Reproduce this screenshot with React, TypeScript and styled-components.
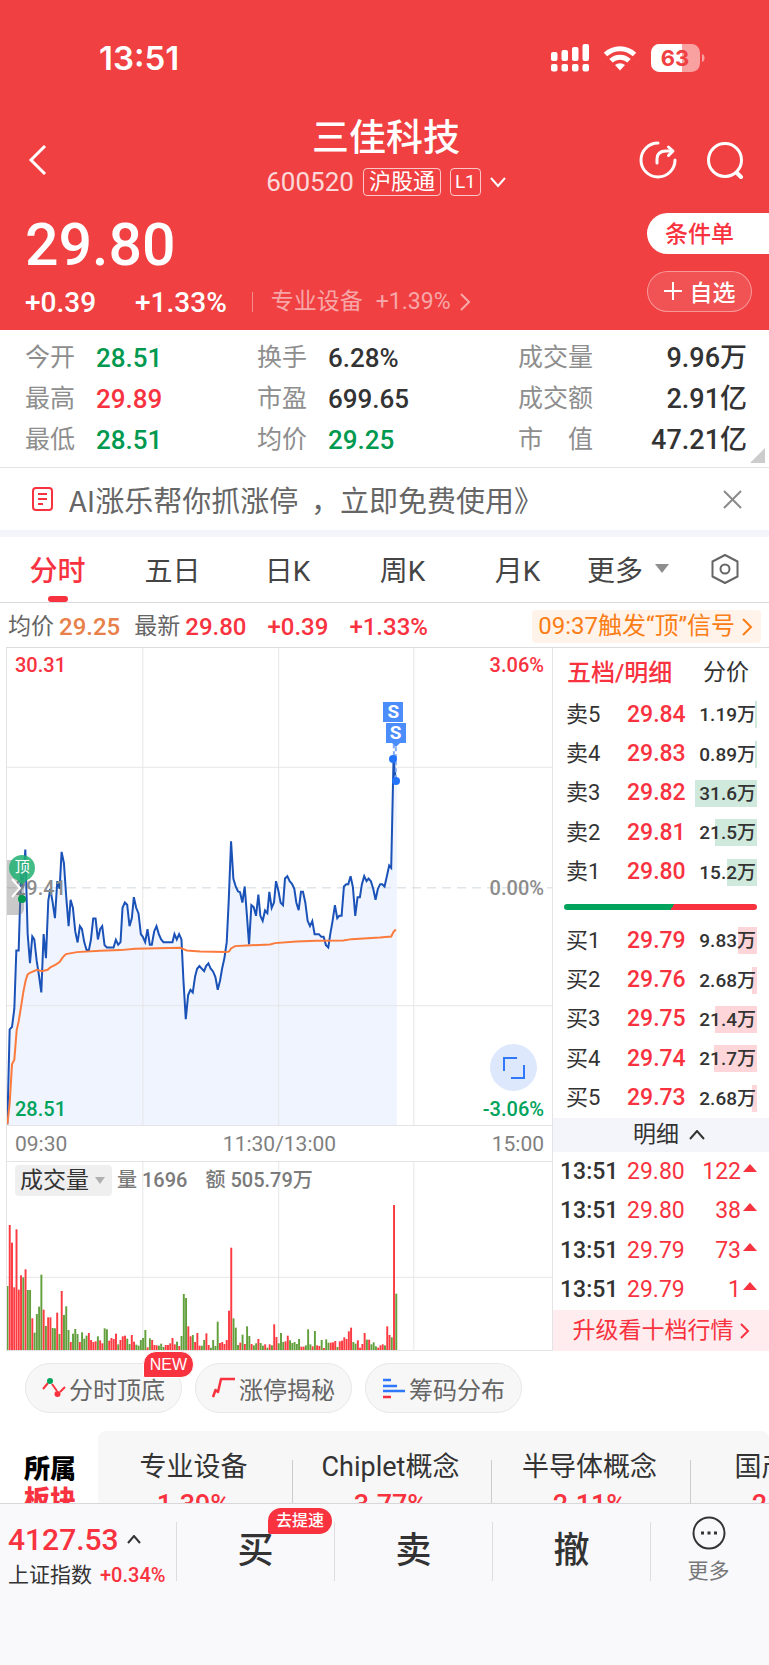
import styled, { createGlobalStyle } from 'styled-components';

const RED = '#f8333f';
const GREEN = '#00a35c';
const DARK_GREEN = '#00994f';
const LINE = '#e4e4e6';
const TEXT = '#333';

const GlobalStyle = createGlobalStyle`
  * {
    box-sizing: border-box;
  }

  body {
    margin: 0;
    background: #fff;
    color: ${TEXT};
    font-family: Roboto, 'Noto Sans CJK SC', sans-serif;
  }

  button,
  select {
    margin: 0;
    padding: 0;
    border: none;
    background: none;
    color: inherit;
    font: inherit;
    cursor: pointer;
  }

  a {
    color: inherit;
    text-decoration: none;
  }

  svg {
    display: block;
    flex: none;
  }
`;

const Screen = styled.div`
  display: flex;
  flex-direction: column;
  height: 100vh;
`;

const Content = styled.main`
  flex: 1;
  min-height: 0;
  overflow: hidden;
`;

/* ---------- header ---------- */

const Header = styled.header`
  height: 330px;
  background: #f04042;
  color: #fff;
`;

const StatusBar = styled.div`
  display: flex;
  align-items: center;
  justify-content: space-between;
  height: 116px;
  padding: 0 64px 0 99px;
  font: 600 33px/1 Inter, sans-serif;

  div {
    display: flex;
    align-items: center;
    gap: 14px;
  }
`;

const TitleBar = styled.div`
  display: grid;
  grid-template-columns: 1fr auto 1fr;
  align-items: center;
  height: 84px;
  padding: 0 25px 0 28px;
`;

const TitleBlock = styled.div`
  display: flex;
  flex-direction: column;
  align-items: center;
  gap: 6px;

  h1 {
    margin: 0;
    font: 500 37px/38px 'Noto Sans CJK SC', sans-serif;
  }
`;

const CodeRow = styled.div`
  display: flex;
  align-items: center;
  gap: 9px;
  height: 44px;
  font-size: 26px;

  > span:first-child {
    opacity: 0.8;
  }
`;

const Tag = styled.span`
  height: 28px;
  padding: 0 5px;
  border: 1px solid rgba(255, 255, 255, 0.7);
  border-radius: 4px;
  font-size: 22px;
  line-height: 25px;
`;

const LevelTag = styled(Tag)`
  padding: 0 4px;
  font-size: 19px;
`;

const IconGroup = styled.div`
  display: flex;
  justify-content: flex-end;
  gap: 29px;
`;

const QuoteHead = styled.div`
  display: flex;
  justify-content: space-between;
  padding: 13px 0 0 25px;
`;

const Price = styled.div`
  font-size: 59px;
  font-weight: 500;
  line-height: 64px;
`;

const ChangeRow = styled.div`
  display: flex;
  align-items: center;
  height: 28px;
  margin-top: 11px;
  font-size: 28px;
  font-weight: 500;

  > span + span {
    margin-left: 39px;
  }

  a {
    display: flex;
    align-items: center;
    gap: 13px;
    margin-left: 25px;
    padding-left: 18px;
    border-left: 1px solid rgba(255, 255, 255, 0.4);
    font-size: 23px;
    font-weight: 400;
    line-height: 20px;
    color: rgba(255, 255, 255, 0.55);
  }

  svg {
    margin-left: -4px;
  }
`;

const HeadActions = styled.div`
  display: flex;
  flex-direction: column;
  gap: 17px;
  width: 122px;
  font-size: 23px;
  font-weight: 500;
`;

const OrderButton = styled.button`
  height: 41px;
  padding: 0 34px 3px 18px;
  border-radius: 21px 0 0 21px;
  background: #fff;
  color: ${RED};
  text-align: left;
  white-space: nowrap;
`;

const WatchButton = styled.button`
  display: flex;
  align-items: center;
  justify-content: center;
  gap: 8px;
  height: 41px;
  width: 105px;
  padding-bottom: 2px;
  border: 1px solid rgba(255, 255, 255, 0.4);
  border-radius: 21px;
  background: rgba(255, 255, 255, 0.1);
`;

/* ---------- stats and banner ---------- */

const Stats = styled.dl`
  position: relative;
  display: grid;
  grid-template-columns: 232fr 261fr 229fr;
  grid-auto-rows: 41px;
  margin: 0;
  padding: 7px 22px 7px 25px;
  border-bottom: 1px solid ${LINE};
`;

const Stat = styled.div<{ $spread?: boolean; $color?: string }>`
  display: flex;
  align-items: center;
  justify-content: ${(p) => (p.$spread ? 'space-between' : 'flex-start')};
  gap: 21px;

  dt {
    font-size: 25px;
    color: #8e8e8e;
    line-height: 40px;
  }

  dd {
    margin: 0;
    font-size: ${(p) => (p.$spread ? 27 : 26)}px;
    font-weight: 500;
    line-height: 40px;
    color: ${(p) => p.$color ?? TEXT};
  }
`;

const Corner = styled.i`
  position: absolute;
  right: 4px;
  bottom: 4px;
  border-bottom: 15px solid #ccc;
  border-left: 15px solid transparent;
`;

const Banner = styled.div`
  display: flex;
  align-items: center;
  height: 69px;
  padding: 0 27px 0 32px;
  border-bottom: 7px solid #f3f5fb;

  a {
    flex: 1;
    margin-left: 15px;
    font: 400 29px/40px 'Noto Sans CJK SC', sans-serif;
    color: #666;
    white-space: pre;
  }
`;

/* ---------- period tabs ---------- */

const Tabs = styled.nav`
  display: grid;
  grid-template-columns: repeat(5, 115fr) 106fr 88fr;
  height: 66px;
  border-bottom: 1px solid #dcdcde;
`;

const Tab = styled.button<{ $active?: boolean }>`
  position: relative;
  display: flex;
  align-items: center;
  justify-content: center;
  gap: 12px;
  padding-bottom: 2px;
  font-size: 28px;
  font-weight: ${(p) => (p.$active ? 500 : 400)};
  color: ${(p) => (p.$active ? RED : '#444')};

  &::after {
    content: '';
    display: ${(p) => (p.$active ? 'block' : 'none')};
    position: absolute;
    bottom: 0;
    width: 20px;
    height: 6px;
    border-radius: 3px;
    background: ${RED};
  }
`;

const Triangle = styled.i<{ $size: number; $color: string }>`
  border-top: ${(p) => p.$size + 2}px solid ${(p) => p.$color};
  border-left: ${(p) => p.$size}px solid transparent;
  border-right: ${(p) => p.$size}px solid transparent;
`;

const InfoRow = styled.div`
  display: flex;
  align-items: center;
  height: 44px;
  padding: 3px 8px 0;
  font-size: 24px;
  line-height: 32px;
  white-space: nowrap;
`;

const InfoLabel = styled.span`
  font-size: 23px;
  color: #666;
`;

const InfoValue = styled.b<{ $color?: string; $gap?: number }>`
  margin: 0 ${(p) => p.$gap ?? 21}px 0 0;
  font-weight: 500;
  color: ${(p) => p.$color ?? RED};

  ${InfoLabel} + & {
    margin-left: 5px;
  }
`;

const Signal = styled.button`
  display: flex;
  align-items: center;
  gap: 7px;
  height: 33px;
  margin-left: auto;
  padding: 0 8px 0 6px;
  border-radius: 4px;
  background: #fff3ea;
  color: #fb7d15;
  line-height: 33px;
`;

/* ---------- charts ---------- */

const Board = styled.section`
  display: grid;
  grid-template-columns: 547fr 216fr;
  margin-left: 6px;
  border-top: 1px solid #dcdcde;
`;

const ChartColumn = styled.div`
  border-left: 1px solid ${LINE};
  border-right: 1px solid ${LINE};
`;

const ChartBox = styled.div<{ $height: number }>`
  position: relative;
  height: ${(p) => p.$height}px;
  border-bottom: 1px solid ${LINE};

  > svg {
    width: 100%;
    height: 100%;
  }
`;

const ChartLabel = styled.span<{ $top: string; $right?: boolean; $color: string }>`
  position: absolute;
  top: ${(p) => p.$top};
  ${(p) => (p.$right ? 'right: 8px' : 'left: 8px')};
  font-size: 20px;
  font-weight: 500;
  line-height: 24px;
  color: ${(p) => p.$color};
`;

const Pin = styled.div<{ $x: number; $y: number }>`
  position: absolute;
  left: ${(p) => p.$x}%;
  top: ${(p) => p.$y}%;
  transform: translate(-50%, -50%);
`;

const SellFlag = styled(Pin)`
  width: 22px;
  height: 22px;
  border: 1px solid #fff;
  background: #4c8dfc;
  color: #fff;
  font-size: 19px;
  font-weight: 700;
  line-height: 20px;
  text-align: center;

  &::after {
    content: '';
    position: absolute;
    left: 6px;
    top: 20px;
    border-top: 4px solid #4c8dfc;
    border-left: 4px solid transparent;
    border-right: 4px solid transparent;
  }
`;

const Dot = styled(Pin)<{ $color: string }>`
  width: 8px;
  height: 8px;
  border-radius: 50%;
  background: ${(p) => p.$color};
`;

const TopFlag = styled(Pin)`
  width: 26px;
  height: 26px;
  border-radius: 50%;
  background: rgba(34, 178, 115, 0.85);
  color: #fff;
  font-size: 15px;
  line-height: 25px;
  text-align: center;

  &::after {
    content: '';
    position: absolute;
    left: 8px;
    top: 25px;
    border-top: 5px solid rgba(34, 178, 115, 0.85);
    border-left: 5px solid transparent;
    border-right: 5px solid transparent;
  }
`;

const SideHandle = styled.button`
  position: absolute;
  left: 0;
  top: 44.5%;
  display: flex;
  align-items: center;
  width: 17px;
  height: 55px;
  padding-left: 3px;
  border-radius: 0 6px 6px 0;
  background: rgba(120, 120, 120, 0.4);
  color: #fff;
`;

const ExpandButton = styled.button`
  position: absolute;
  right: 15px;
  bottom: 34px;
  display: grid;
  place-items: center;
  width: 47px;
  height: 47px;
  border-radius: 50%;
  background: #dee8fd;
`;

const TimeAxis = styled.div`
  display: flex;
  align-items: center;
  justify-content: space-between;
  height: 36px;
  padding: 0 8px;
  border-bottom: 1px solid ${LINE};
  font-size: 21px;
  color: #808080;
`;

const VolumeHead = styled.div`
  position: absolute;
  top: 3px;
  left: 8px;
  display: flex;
  align-items: center;
  font-size: 20px;
  font-weight: 500;
  line-height: 31px;
  color: #7a7a7a;

  span {
    margin-left: 5px;
    white-space: pre;
  }

  span + span {
    margin-left: 18px;
  }
`;

const VolumePicker = styled.label`
  position: relative;
  display: flex;
  align-items: center;
  width: 97px;
  height: 31px;
  border-radius: 4px;
  background: #efefef;

  select {
    appearance: none;
    width: 100%;
    height: 31px;
    padding-left: 5px;
    font-size: 23px;
    font-weight: 400;
    line-height: 31px;
    color: ${TEXT};
    outline: none;
  }

  i {
    position: absolute;
    right: 7px;
  }
`;

/* ---------- order book ---------- */

const BookHead = styled.div`
  display: flex;
  align-items: center;
  justify-content: space-between;
  height: 47px;
  padding: 0 20px 3px 14px;
  font-size: 23px;

  button:first-child {
    font-size: 24px;
    font-weight: 500;
    color: ${RED};
  }
`;

const BookTable = styled.table`
  width: 100%;
  height: 197px;
  border-collapse: collapse;

  td,
  th {
    padding: 0;
    font-size: 22px;
    font-weight: 400;
    line-height: 30px;
    text-align: left;
  }

  th {
    width: 74px;
    padding-left: 13px;
  }

  td {
    font-size: 23px;
    font-weight: 500;
    color: ${RED};
  }

  td:last-child {
    padding-right: 12px;
    text-align: right;
  }
`;

const Depth = styled.div<{ $color: string }>`
  position: relative;
  width: 62px;
  height: 27px;
  margin-left: auto;
  font-size: 19px;
  line-height: 27px;
  color: ${TEXT};

  i {
    position: absolute;
    top: 0;
    right: 0;
    height: 100%;
    background: ${(p) => p.$color};
  }

  span {
    position: relative;
    margin-right: 1px;
  }
`;

const Balance = styled.div`
  height: 6px;
  margin: 12px 12px 11px 11px;
  border-radius: 3px;
  background: linear-gradient(120deg, ${GREEN} 56%, ${RED} 56%);
`;

const DetailToggle = styled.button`
  display: flex;
  align-items: center;
  justify-content: center;
  gap: 10px;
  width: 100%;
  height: 34px;
  padding-left: 16px;
  background: #f3f5fa;
  font-size: 23px;
  line-height: 32px;
`;

const TickTable = styled(BookTable)`
  height: 158px;

  th {
    padding-left: 7px;
    font-size: 23px;
    font-weight: 500;
  }

  td {
    font-weight: 400;
  }

  td:last-child svg {
    display: inline-block;
    margin-left: 2px;
    vertical-align: 7px;
  }
`;

const Upgrade = styled.a`
  display: flex;
  align-items: center;
  justify-content: center;
  gap: 6px;
  height: 41px;
  background: #feecee;
  color: ${RED};
  font-size: 23px;
  line-height: 40px;
`;

/* ---------- chips and sectors ---------- */

const Chips = styled.div`
  display: flex;
  gap: 13px;
  padding: 12px 25px 18px;
`;

const Chip = styled.button`
  position: relative;
  display: flex;
  align-items: center;
  justify-content: center;
  gap: 3px;
  width: 157px;
  height: 50px;
  border: 1px solid #e8e8e8;
  border-radius: 25px;
  background: #f7f7f7;
  color: #666;
  font-size: 24px;
  white-space: nowrap;
`;

const Badge = styled.em`
  position: absolute;
  height: 26px;
  padding: 0 8px;
  border-radius: 13px 13px 13px 2px;
  background: ${RED};
  color: #fff;
  font: 500 16px/25px 'Liberation Sans', 'Noto Sans CJK SC', sans-serif;
  white-space: nowrap;
`;

const NewBadge = styled(Badge)`
  right: -13px;
  top: -13px;
  height: 27px;
  padding: 0 6px;
  border: 1px solid #fff;
  font-weight: 400;
`;

const Sectors = styled.section`
  display: flex;
`;

const SectorTitle = styled.h2`
  flex: none;
  width: 98px;
  margin: 0;
  padding: 20px 0 0 24px;
  font: 900 26px/31px 'Noto Sans CJK SC', sans-serif;
  color: #000;

  span {
    display: block;
    color: ${RED};
  }
`;

const SectorList = styled.div`
  flex: 1;
  display: flex;
  padding-top: 29px;
  border-radius: 8px 8px 0 0;
  background: #f7f7f7;
  overflow: hidden;
`;

const Sector = styled.a`
  flex: 0 0 199px;
  display: flex;
  flex-direction: column;
  align-items: center;
  gap: 20px;
  height: 80px;
  padding-right: 3px;
  border-right: 1px solid #ccc;
  font-size: 27px;
  line-height: 14px;
  white-space: nowrap;

  &:first-child {
    flex-basis: 195px;
  }

  b {
    font-weight: 500;
    line-height: 22px;
    color: ${RED};
  }
`;

/* ---------- bottom bar ---------- */

const BottomBar = styled.footer`
  display: grid;
  grid-template-columns: 177fr 158fr 158fr 158fr 118fr;
  align-items: start;
  padding: 18px 0 80px;
  border-top: 1px solid #d8d8dc;
  background: #f9f9fc;
`;

const IndexCell = styled.button`
  display: flex;
  flex-direction: column;
  gap: 2px;
  height: 59px;
  padding-left: 8px;
  border-right: 1px solid #ddd;
  color: ${RED};

  div {
    display: flex;
    align-items: center;
    gap: 8px;
    font-size: 20px;
    font-weight: 500;
    line-height: 30px;
    white-space: nowrap;
  }

  div:first-child {
    font-size: 30px;
    line-height: 36px;
  }

  svg,
  span {
    font-size: 21px;
    font-weight: 400;
    color: ${TEXT};
  }
`;

const Trade = styled.button`
  position: relative;
  height: 59px;
  border-right: 1px solid #ddd;
  font-size: 36px;
  font-weight: 500;
  line-height: 59px;
`;

const SpeedBadge = styled(Badge)`
  right: 2px;
  top: -14px;
`;

const MoreCell = styled.button`
  display: flex;
  flex-direction: column;
  align-items: center;
  gap: 7px;
  padding-right: 3px;
  font-size: 21px;
  line-height: 28px;
  color: #777;

  svg {
    margin-top: -6px;
  }
`;

/* ---------- data ---------- */

const stats = [
  { label: '今开', value: '28.51', color: DARK_GREEN },
  { label: '换手', value: '6.28%' },
  { label: '成交量', value: '9.96万', spread: true },
  { label: '最高', value: '29.89', color: RED },
  { label: '市盈', value: '699.65' },
  { label: '成交额', value: '2.91亿', spread: true },
  { label: '最低', value: '28.51', color: DARK_GREEN },
  { label: '均价', value: '29.25', color: DARK_GREEN },
  { label: '市　值', value: '47.21亿', spread: true },
];

const periods = ['分时', '五日', '日K', '周K', '月K'];

interface IOrder {
  name: string;
  price: string;
  volume: string;
  depth: number;
}

const asks: IOrder[] = [
  { name: '卖5', price: '29.84', volume: '1.19万', depth: 3 },
  { name: '卖4', price: '29.83', volume: '0.89万', depth: 3 },
  { name: '卖3', price: '29.82', volume: '31.6万', depth: 100 },
  { name: '卖2', price: '29.81', volume: '21.5万', depth: 68 },
  { name: '卖1', price: '29.80', volume: '15.2万', depth: 48 },
];

const bids: IOrder[] = [
  { name: '买1', price: '29.79', volume: '9.83万', depth: 31 },
  { name: '买2', price: '29.76', volume: '2.68万', depth: 8 },
  { name: '买3', price: '29.75', volume: '21.4万', depth: 68 },
  { name: '买4', price: '29.74', volume: '21.7万', depth: 69 },
  { name: '买5', price: '29.73', volume: '2.68万', depth: 8 },
];

const ticks = [
  ['13:51', '29.80', '122'],
  ['13:51', '29.80', '38'],
  ['13:51', '29.79', '73'],
  ['13:51', '29.79', '1'],
];

const sectors = [
  ['专业设备', '1.39%'],
  ['Chiplet概念', '3.77%'],
  ['半导体概念', '2.11%'],
  ['国产芯片', '2.05%'],
];

const pricePoints =
  '21,1452 28,1167 35,1160 42,1105 48,930 55,930 62,700 68,740 75,627 82,880 89,968 96,888 102,897 109,960 116,1005 123,1056 130,881 137,953 144,780 150,745 157,785 164,833 171,722 178,745 184,634 191,668 198,770 205,857 211,778 218,802 225,873 232,906 239,857 245,865 252,905 259,929 266,929 272,898 279,834 286,834 293,897 300,865 306,857 313,914 320,921 340,921 347,898 354,913 361,905 367,802 374,786 381,793 388,857 395,833 401,770 408,802 415,819 422,881 428,889 435,905 442,866 449,913 455,913 462,873 469,857 476,881 483,897 490,905 517,905 523,881 530,897 537,881 544,897 550,1020 557,1136 564,1064 571,1048 578,1056 585,1008 591,985 598,977 612,992 618,977 625,969 632,985 639,993 646,1010 653,1048 660,1020 666,985 673,953 680,905 686,780 693,602 700,715 707,738 714,753 720,755 727,786 734,738 741,830 747,912 754,794 761,800 768,826 775,762 781,826 788,841 795,810 802,818 808,754 815,802 822,786 828,722 835,750 842,787 849,794 855,714 862,707 869,722 876,730 883,745 889,786 896,809 903,754 909,754 916,786 923,841 930,857 937,842 944,881 957,881 964,889 971,889 978,914 985,921 991,881 998,841 1005,794 1012,833 1018,826 1025,826 1032,738 1039,731 1045,731 1052,707 1059,740 1066,826 1073,770 1080,770 1086,731 1093,707 1100,722 1106,714 1113,722 1120,745 1127,778 1134,745 1141,731 1147,731 1154,738 1161,707 1168,675 1174,682 1181,356 1188,420';

const averagePoints =
  '21,1452 28,1390 35,1272 42,1258 49,1170 55,1143 62,1100 69,1055 76,1020 82,1002 89,997 110,988 125,992 142,988 150,981 165,973 178,965 188,950 197,941 230,935 300,931 360,929 405,925 540,922 560,930 600,933 680,935 687,933 693,924 705,917 740,915 810,912 825,908 890,903 950,901 1030,900 1055,896 1140,891 1174,888 1181,874 1188,867';

// One entry per minute: g = down, r = up, followed by the bar height
const volumes =
  'g192 r375 r322 r188 r362 r181 r224 g218 r242 g180 g180 r95 g52 g108 g130 g226 r121 g72 r98 r98 g66 g65 r112 g48 r177 g105 g131 g60 r24 g49 g63 g48 r24 g53 g34 g43 r51 r30 r24 r26 g41 r29 r20 g65 g62 r28 r36 r33 r49 g17 r30 r41 r43 g34 g18 r45 r25 g16 g13 g30 g36 g60 r8 g35 r30 r15 r14 g13 g19 g9 r15 r15 r20 r36 r17 g25 r12 g42 g168 g156 r71 r41 g45 r24 r51 r13 g13 g30 r50 r15 g7 g30 g12 g85 r21 r24 r18 r30 r118 r307 g95 g67 g15 r22 g46 r18 g71 g42 r18 g14 g20 r33 g21 g13 r17 g7 r17 g14 r77 r39 g20 g51 g24 r26 r43 g29 g21 g24 g18 g33 r10 r10 g14 g62 g17 r11 g57 r14 r12 g30 r6 g32 g22 r22 r23 r27 g9 r26 r28 r38 r33 r56 r67 g24 g19 r29 r7 r18 r51 g31 r31 g17 g23 g11 r7 r14 r17 g14 r71 r45 g38 r435 g169'.split(
    ' ',
  );

/* ---------- components ---------- */

interface IChevronProps {
  d: string;
  width: number;
  height: number;
  stroke?: number;
}

function Chevron({ d, width, height, stroke = 2 }: IChevronProps) {
  return (
    <svg width={width} height={height} fill="none" stroke="currentColor" strokeWidth={stroke}>
      <path d={d} />
    </svg>
  );
}

function StatusIcons() {
  return (
    <div>
      <svg width="38" height="28" fill="#fff">
        {[0, 1, 2, 3].map((i) => (
          <g key={i}>
            <rect x={i * 10.5} y={[8, 6, 3, 0][i]} width="6.5" height={[9, 11, 14, 17][i]} rx="2" />
            <rect x={i * 10.5} y="20" width="6.5" height="7.5" rx="2" />
          </g>
        ))}
      </svg>
      <svg width="34" height="26" fill="none" stroke="#fff" strokeWidth="5">
        <path d="M2.5 9.5a21 21 0 0 1 29 0" />
        <path d="M8 15.8a13 13 0 0 1 18 0" />
        <path d="M17 25.5l-5-5.4a7.4 7.4 0 0 1 10 0z" fill="#fff" stroke="none" />
      </svg>
      <svg width="54" height="28">
        <rect width="49" height="28" rx="8.5" fill="#f9a0a0" />
        <path d="M31 0H8.5A8.5 8.5 0 0 0 0 8.5v11A8.5 8.5 0 0 0 8.5 28H31z" fill="#fff" />
        <path d="M51 10c3.4 1 3.4 7 0 8z" fill="#f9a0a0" />
        <text x="24" y="22" textAnchor="middle" fontSize="22" fontWeight="700" fill="#f04042">
          63
        </text>
      </svg>
    </div>
  );
}

function OrderRows({ orders, color }: { orders: IOrder[]; color: string }) {
  return (
    <BookTable>
      <tbody>
        {orders.map((order) => (
          <tr key={order.name}>
            <th scope="row">{order.name}</th>
            <td>{order.price}</td>
            <td>
              <Depth $color={color}>
                <i style={{ width: `${order.depth}%` }} />
                <span>{order.volume}</span>
              </Depth>
            </td>
          </tr>
        ))}
      </tbody>
    </BookTable>
  );
}

function PriceChart() {
  return (
    <ChartBox $height={478}>
      <svg viewBox="20 22 1637 1432" preserveAspectRatio="none" fill="none">
        <polygon points={`${pricePoints} 1191,420 1191,1454 21,1454`} fill="#eff4fe" />
        <path
          d="M428 22V1454M836 22V1454M1242 22V1454M20 380H1657M20 1096H1657"
          stroke="#e6e6e8"
          strokeWidth="1"
          vectorEffect="non-scaling-stroke"
        />
        <path
          d="M20 742H1657"
          stroke="#cfd8de"
          strokeWidth="1"
          strokeDasharray="9 6"
          vectorEffect="non-scaling-stroke"
        />
        <polyline points={pricePoints} stroke="#1a52b8" strokeWidth="2" vectorEffect="non-scaling-stroke" />
        <polyline points={averagePoints} stroke="#fb7a3c" strokeWidth="2" vectorEffect="non-scaling-stroke" />
        <path
          d="M1182 290V356M1188 320V420"
          stroke="#7fa9f5"
          strokeWidth="2"
          strokeDasharray="4 3"
          vectorEffect="non-scaling-stroke"
        />
      </svg>
      <ChartLabel $top="5px" $color={RED}>30.31</ChartLabel>
      <ChartLabel $top="5px" $right $color={RED}>3.06%</ChartLabel>
      <ChartLabel $top="calc(50% - 11px)" $color="#8c8c8c">29.41</ChartLabel>
      <ChartLabel $top="calc(50% - 11px)" $right $color="#8c8c8c">0.00%</ChartLabel>
      <SideHandle aria-label="展开">
        <Chevron d="M2 1L10 10L2 19" width={12} height={20} />
      </SideHandle>
      <ChartLabel $top="449px" $color={GREEN}>28.51</ChartLabel>
      <ChartLabel $top="449px" $right $color={GREEN}>-3.06%</ChartLabel>
      <TopFlag $x={2.8} $y={46.2}>顶</TopFlag>
      <Dot $x={2.8} $y={52.7} $color="#009a50" />
      <SellFlag $x={70.9} $y={13.4}>S</SellFlag>
      <SellFlag $x={71.3} $y={17.8}>S</SellFlag>
      <Dot $x={70.9} $y={23.3} $color="#2373fb" />
      <Dot $x={71.3} $y={27.8} $color="#2373fb" />
      <ExpandButton aria-label="全屏">
        <svg width="22" height="22" fill="none" stroke="#2f78fa" strokeWidth="2">
          <path d="M1 14V1H14M21 8V21H8" />
        </svg>
      </ExpandButton>
    </ChartBox>
  );
}

function VolumeChart() {
  return (
    <ChartBox $height={189}>
      <svg viewBox="20 -86 1637 564" preserveAspectRatio="none">
        <path
          d="M428 -86V478M836 -86V478M1242 -86V478M20 260H1657"
          stroke="#e6e6e8"
          strokeWidth="1"
          vectorEffect="non-scaling-stroke"
        />
        {volumes.map((bar, i) => {
          const height = Number(bar.slice(1));
          return (
            <rect
              key={i}
              x={18.5 + i * 6.79}
              y={478 - height}
              width="5.8"
              height={height}
              fill={bar[0] === 'r' ? '#fb3a41' : '#62a03e'}
            />
          );
        })}
      </svg>
      <VolumeHead>
        <VolumePicker>
          <select aria-label="指标">
            <option>成交量</option>
          </select>
          <Triangle $size={5} $color="#b0b0b0" />
        </VolumePicker>
        <span>量 1696</span>
        <span>额 505.79万</span>
      </VolumeHead>
    </ChartBox>
  );
}

export default function App() {
  return (
    <Screen>
      <GlobalStyle />
      <Content>
        <Header>
          <StatusBar>
            <span>13:51</span>
            <StatusIcons />
          </StatusBar>
          <TitleBar>
            <button aria-label="返回">
              <Chevron d="M17 2L3 16L17 30" width={20} height={32} stroke={3} />
            </button>
            <TitleBlock>
              <h1>三佳科技</h1>
              <CodeRow>
                <span>600520</span>
                <Tag>沪股通</Tag>
                <LevelTag>L1</LevelTag>
                <Chevron d="M1 1L8 9L15 1" width={16} height={11} />
              </CodeRow>
            </TitleBlock>
            <IconGroup>
              <button aria-label="分享">
                <svg width="38" height="38" fill="none" stroke="#fff" strokeWidth="3" strokeLinecap="round">
                  <path d="M19 2A17 17 0 1 0 36 19" />
                  <path d="M18 22V18Q18 10 27 10H33" />
                  <path d="M29.5 6L34 10L29.5 14.5" strokeLinejoin="round" />
                </svg>
              </button>
              <button aria-label="搜索">
                <svg width="38" height="38" fill="none" stroke="#fff" strokeWidth="3" strokeLinecap="round">
                  <circle cx="19" cy="19" r="16.5" />
                  <path d="M31 32L35 36" strokeWidth="4" />
                </svg>
              </button>
            </IconGroup>
          </TitleBar>
          <QuoteHead>
            <div>
              <Price>29.80</Price>
              <ChangeRow>
                <span>+0.39</span>
                <span>+1.33%</span>
                <a href="#sector">
                  专业设备
                  <span>+1.39%</span>
                  <Chevron d="M1 1L9 9L1 17" width={11} height={18} />
                </a>
              </ChangeRow>
            </div>
            <HeadActions>
              <OrderButton>条件单</OrderButton>
              <WatchButton>
                <Chevron d="M0 10H18M9 1V19" width={18} height={20} />
                自选
              </WatchButton>
            </HeadActions>
          </QuoteHead>
        </Header>

        <Stats>
          {stats.map((stat) => (
            <Stat key={stat.label} $spread={stat.spread} $color={stat.color}>
              <dt>{stat.label}</dt>
              <dd>{stat.value}</dd>
            </Stat>
          ))}
          <Corner />
        </Stats>

        <Banner>
          <svg width="22" height="24" fill="none" stroke={RED} strokeWidth="2">
            <rect x="1" y="1" width="19" height="22" rx="3" />
            <path d="M6 7H15M6 12H15M6 17H11" />
          </svg>
          <a href="#ai">{'AI涨乐帮你抓涨停  ，立即免费使用》'}</a>
          <button aria-label="关闭">
            <svg width="19" height="19" fill="none" stroke="#8a8a8a" strokeWidth="2">
              <path d="M1 1L18 18M18 1L1 18" />
            </svg>
          </button>
        </Banner>

        <Tabs>
          {periods.map((period, i) => (
            <Tab key={period} $active={i === 0}>
              {period}
            </Tab>
          ))}
          <Tab>
            更多
            <Triangle $size={7} $color="#8e8e8e" />
          </Tab>
          <Tab aria-label="设置">
            <svg width="30" height="32" fill="none" stroke="#666" strokeWidth="2">
              <path d="M15 2L27.5 8.5V23.5L15 30L2.5 23.5V8.5Z" strokeLinejoin="round" />
              <circle cx="15" cy="16" r="4.5" />
            </svg>
          </Tab>
        </Tabs>

        <InfoRow>
          <InfoLabel>均价</InfoLabel>
          <InfoValue $color="#e8804a" $gap={14}>
            29.25
          </InfoValue>
          <InfoLabel>最新</InfoLabel>
          <InfoValue>29.80</InfoValue>
          <InfoValue>+0.39</InfoValue>
          <InfoValue>+1.33%</InfoValue>
          <Signal>
            09:37触发“顶”信号
            <Chevron d="M1 1L9 9L1 17" width={11} height={18} />
          </Signal>
        </InfoRow>

        <Board>
          <ChartColumn>
            <PriceChart />
            <TimeAxis>
              <span>09:30</span>
              <span>11:30/13:00</span>
              <span>15:00</span>
            </TimeAxis>
            <VolumeChart />
          </ChartColumn>
          <div>
            <BookHead>
              <button>五档/明细</button>
              <button>分价</button>
            </BookHead>
            <OrderRows orders={asks} color="#cfeadc" />
            <Balance />
            <OrderRows orders={bids} color="#fed6d9" />
            <DetailToggle>
              明细
              <Chevron d="M1 9L8 1L15 9" width={16} height={10} />
            </DetailToggle>
            <TickTable>
              <tbody>
                {ticks.map(([time, price, count], i) => (
                  <tr key={i}>
                    <th scope="row">{time}</th>
                    <td>{price}</td>
                    <td>
                      {count}
                      <svg width="14" height="8" fill={RED}>
                        <path d="M7 0L14 8H0Z" />
                      </svg>
                    </td>
                  </tr>
                ))}
              </tbody>
            </TickTable>
            <Upgrade href="#upgrade">
              升级看十档行情
              <Chevron d="M1 1L8 8L1 15" width={10} height={16} />
            </Upgrade>
          </div>
        </Board>

        <Chips>
          <Chip>
            <svg width="24" height="22" fill="none" stroke={RED} strokeWidth="2">
              <path d="M1 12L6 6M10 7L15 14M18 15L23 10" />
              <circle cx="8" cy="4" r="3" fill={GREEN} stroke="none" />
              <circle cx="15.5" cy="17" r="3" fill={RED} stroke="none" />
            </svg>
            分时顶底
            <NewBadge>NEW</NewBadge>
          </Chip>
          <Chip>
            <svg width="24" height="22" fill="none" stroke={RED} strokeWidth="2.5">
              <path d="M1 20L3.5 13L6 15L9 2H23" strokeLinejoin="round" />
            </svg>
            涨停揭秘
          </Chip>
          <Chip>
            <svg width="24" height="22" fill="none" stroke="#2f78fa" strokeWidth="2.5">
              <path d="M1 3H9M1 9H15M1 14H23" />
              <path d="M1 20H9" stroke={RED} />
            </svg>
            筹码分布
          </Chip>
        </Chips>

        <Sectors>
          <SectorTitle>
            所属<span>板块</span>
          </SectorTitle>
          <SectorList>
            {sectors.map(([name, change]) => (
              <Sector key={name} href="#sector">
                {name}
                <b>{change}</b>
              </Sector>
            ))}
          </SectorList>
        </Sectors>
      </Content>

      <BottomBar>
        <IndexCell>
          <div>
            4127.53
            <Chevron d="M1 8L7 1L13 8" width={14} height={10} />
          </div>
          <div>
            <span>上证指数</span>
            +0.34%
          </div>
        </IndexCell>
        <Trade>
          买
          <SpeedBadge>去提速</SpeedBadge>
        </Trade>
        <Trade>卖</Trade>
        <Trade>撤</Trade>
        <MoreCell>
          <svg width="34" height="34" fill="none" stroke="#333" strokeWidth="2">
            <circle cx="17" cy="17" r="15.5" />
            <path d="M9 17H12M15.5 17H18.5M22 17H25" strokeWidth="3" />
          </svg>
          更多
        </MoreCell>
      </BottomBar>
    </Screen>
  );
}
